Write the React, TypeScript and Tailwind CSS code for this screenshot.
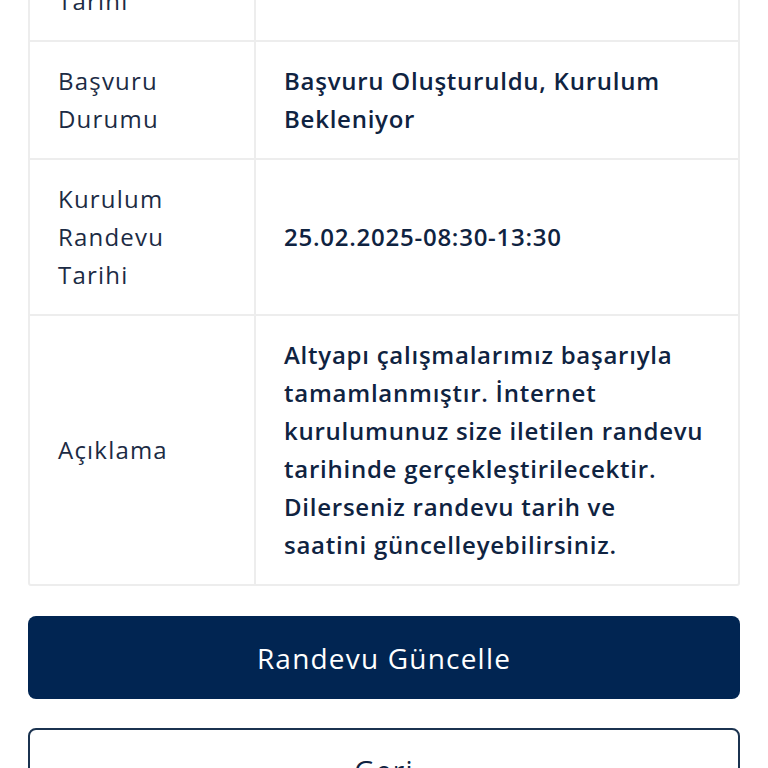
import React from "react";

const rows: { label: string[]; value: string[] }[] = [
  { label: ["Başvuru", "Tarihi"], value: [] },
  { label: ["Başvuru", "Durumu"], value: ["Başvuru Oluşturuldu, Kurulum", "Bekleniyor"] },
  { label: ["Kurulum", "Randevu", "Tarihi"], value: ["25.02.2025-08:30-13:30"] },
  {
    label: ["Açıklama"],
    value: [
      "Altyapı çalışmalarımız başarıyla",
      "tamamlanmıştır. İnternet",
      "kurulumunuz size iletilen randevu",
      "tarihinde gerçekleştirilecektir.",
      "Dilerseniz randevu tarih ve",
      "saatini güncelleyebilirsiniz.",
    ],
  },
];

export default function App() {
  return (
    <div
      className="w-[768px] h-[768px] overflow-hidden bg-white"
      style={{ fontFamily: "'Open Sans', Lato, sans-serif" }}
    >
      <div className="mx-[28px] mt-[-78px]">
        <div className="border-2 border-[#ededed] rounded-[3px]">
          {rows.map((r, i) => (
            <div
              key={i}
              className={`flex ${i > 0 ? "border-t-2 border-[#ededed]" : ""}`}
            >
              <div className="w-[226px] shrink-0 border-r-2 border-[#ededed] px-[28px] py-[20px] flex items-center text-[24px] tracking-[1.2px] leading-[38px] text-[#1c2b44]">
                <div>
                  {r.label.map((l, j) => (
                    <div key={j}>{l}</div>
                  ))}
                </div>
              </div>
              <div className="flex-1 pl-[28px] pr-[12px] py-[20px] flex items-center text-[24px] tracking-[0.75px] leading-[38px] font-semibold text-[#0f2341]">
                <div>
                  {r.value.map((l, j) => (
                    <div key={j} className="whitespace-nowrap">
                      {l}
                    </div>
                  ))}
                </div>
              </div>
            </div>
          ))}
        </div>
        <button className="mt-[30px] w-full h-[83px] rounded-[8px] bg-[#012552] text-white text-[28px] tracking-[1.2px] flex items-center justify-center">
          Randevu Güncelle
        </button>
        <button className="mt-[29px] w-full h-[83px] rounded-[8px] border-2 border-[#1b3350] bg-white text-[#0f2341] text-[28px] tracking-[1.2px] flex items-center justify-center">
          Geri
        </button>
      </div>
    </div>
  );
}
